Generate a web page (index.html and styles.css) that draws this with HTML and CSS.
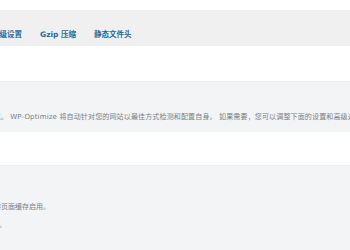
FILE: index.html
```html
<!DOCTYPE html>
<html>

<head>
    <title>WP-Optimize 缓存设置</title>
    <link rel="stylesheet" href="styles.css">
</head>

<body>
    <div class="page">
        <nav class="tabs">
            <a class="tab" href="#">高级设置</a>
            <a class="tab" href="#">Gzip 压缩</a>
            <a class="tab" href="#">静态文件头</a>
        </nav>

        <div class="box box-intro">
            <p class="line intro">大多数情况。 WP-Optimize 将自动针对您的网站以最佳方式检测和配置自身。 如果需要，您可以调整下面的设置和高级选项。</p>
        </div>

        <div class="box box-cache">
            <p class="line first">如需使用，请保持页面缓存启用。</p>
            <p class="line second">此功能需要服务器支持。</p>
        </div>
    </div>
</body>

</html>
```

FILE: styles.css
```css
body {
    margin: 0;
    background: #fff;
    font-family: "DejaVu Sans", "Noto Sans CJK SC", sans-serif;
    overflow: hidden;
}

.page {
    width: 360px;
}

.tabs {
    display: flex;
    margin-top: 10px;
    height: 36px;
    align-items: flex-end;
    padding-bottom: 7px;
    box-sizing: border-box;
    background-color: #f0f0f1;
    margin-left: -17px;
}

.tab {
    font-size: 7.5px;
    font-weight: bold;
    color: #1f6a9a;
    text-decoration: none;
    padding: 0 9px;
}

.box {
    background-color: #f3f4f5;
    border-top: 1px solid #eceeef;
    overflow: hidden;
}

.line {
    margin: 0;
    font-size: 7px;
    color: #7a7f84;
    white-space: nowrap;
}

.box-intro {
    margin-top: 35px;
    height: 51px;
    padding-top: 29px;
    box-sizing: border-box;
}

.intro {
    margin-left: -35px;
    letter-spacing: 0.15px;
}

.box-cache {
    margin-top: 33px;
    height: 90px;
    padding-top: 35px;
    box-sizing: border-box;
}

.first {
    margin-left: -55px;
}

.second {
    margin-left: -71px;
    margin-top: 8px;
}
```
